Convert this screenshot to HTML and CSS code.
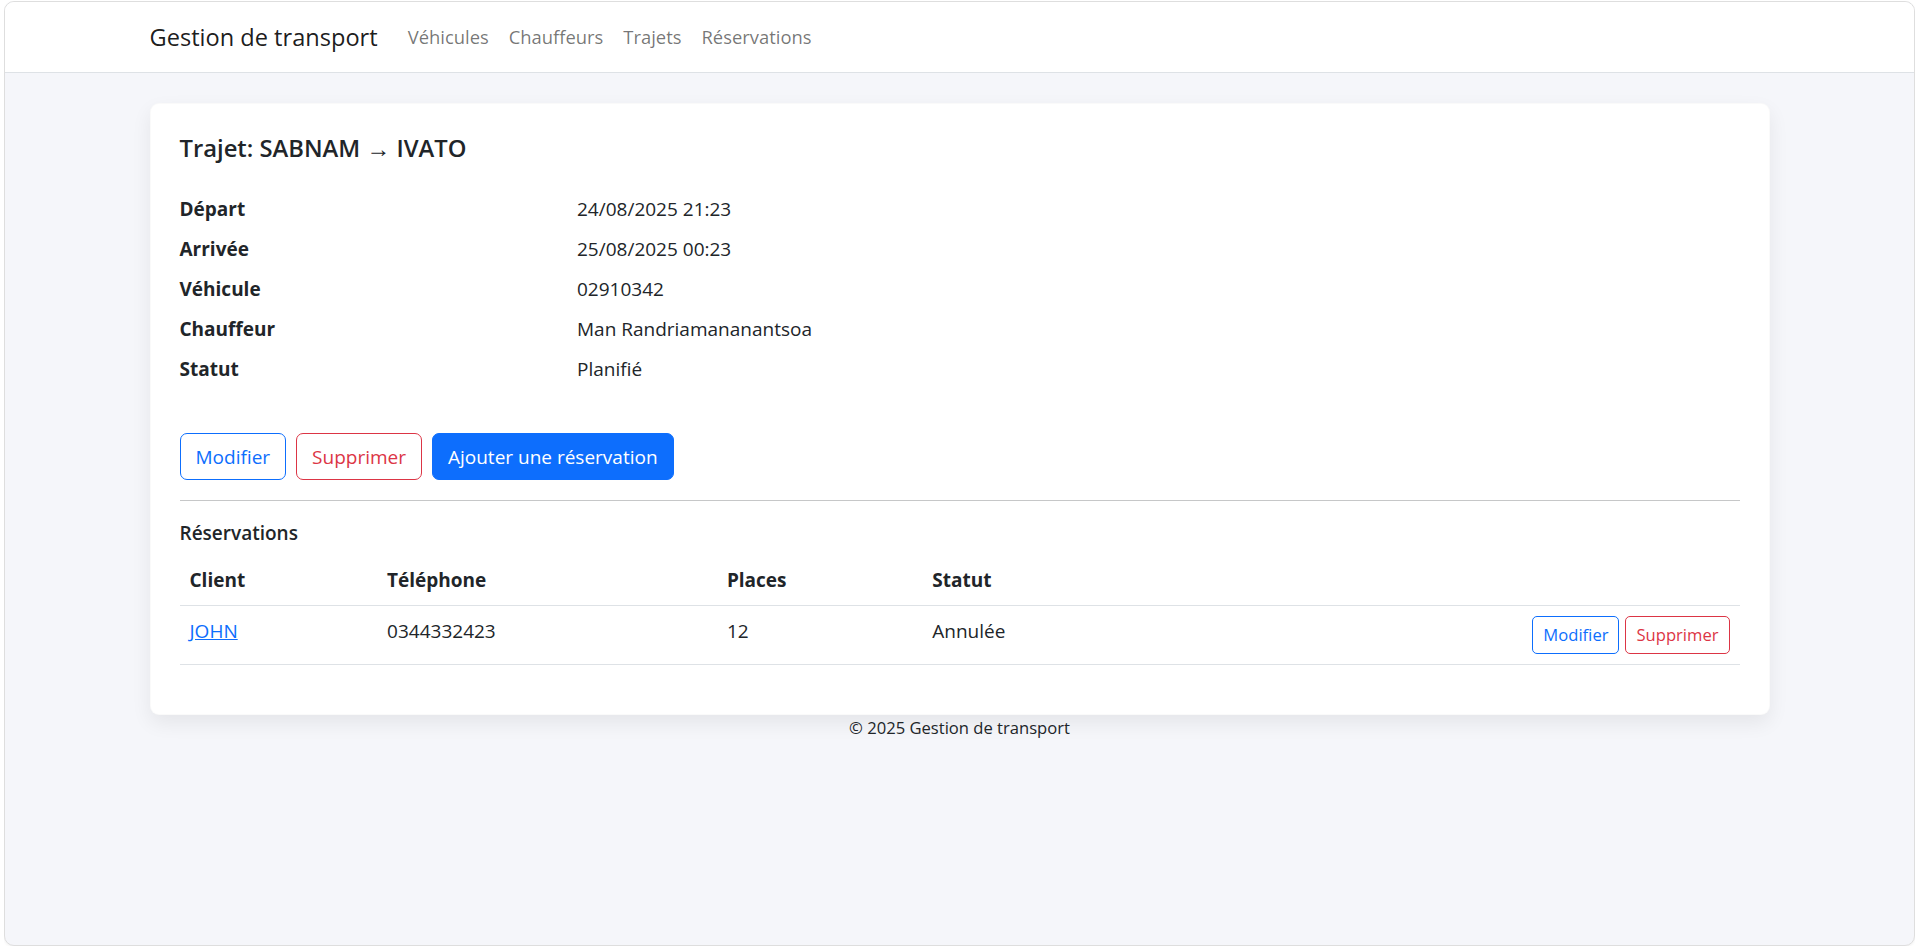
FILE: index.html
```html
<!DOCTYPE html>
<html lang="fr">
<head>
<meta charset="utf-8">
<title>Gestion de transport</title>
<link rel="stylesheet" href="styles.css">
</head>
<body>
<div class="window">
  <nav class="navbar">
    <div class="container nav-inner">
      <a class="brand" href="#">Gestion de transport</a>
      <ul class="nav-links">
        <li><a href="#">Véhicules</a></li>
        <li><a href="#">Chauffeurs</a></li>
        <li><a href="#">Trajets</a></li>
        <li><a href="#">Réservations</a></li>
      </ul>
    </div>
  </nav>
  <main class="container">
    <div class="card">
      <div class="card-body">
        <h5 class="title">Trajet: SABNAM → IVATO</h5>
        <dl class="details">
          <dt>Départ</dt><dd>24/08/2025 21:23</dd>
          <dt>Arrivée</dt><dd>25/08/2025 00:23</dd>
          <dt>Véhicule</dt><dd>02910342</dd>
          <dt>Chauffeur</dt><dd>Man Randriamananantsoa</dd>
          <dt>Statut</dt><dd>Planifié</dd>
        </dl>
        <div class="actions">
          <a class="btn btn-outline-primary" href="#">Modifier</a>
          <a class="btn btn-outline-danger" href="#">Supprimer</a>
          <a class="btn btn-primary" href="#">Ajouter une réservation</a>
        </div>
        <hr class="divider">
        <h6 class="subtitle">Réservations</h6>
        <table class="table">
          <thead>
            <tr>
              <th class="col-client">Client</th>
              <th class="col-phone">Téléphone</th>
              <th class="col-places">Places</th>
              <th class="col-status">Statut</th>
              <th class="col-actions"></th>
            </tr>
          </thead>
          <tbody>
            <tr>
              <td><a class="link" href="#">JOHN</a></td>
              <td>0344332423</td>
              <td>12</td>
              <td>Annulée</td>
              <td class="cell-actions"><a class="btn btn-sm btn-outline-primary" href="#">Modifier</a><a class="btn btn-sm btn-outline-danger" href="#">Supprimer</a></td>
            </tr>
          </tbody>
        </table>
      </div>
    </div>
    <footer class="footer">© 2025 Gestion de transport</footer>
  </main>
</div>
</body>
</html>
```

FILE: styles.css
```css
* { box-sizing: border-box; }

html {
  background: #ffffff;
}

body {
  margin: 1px 2px 0 4px;
  font-family: "Open Sans", "Noto Sans", sans-serif;
  font-size: 19px;
  line-height: 30px;
  color: #212529;
}

.window {
  height: 945px;
  border: 1px solid #dedede;
  border-radius: 10px;
  overflow: hidden;
  background: #f5f6fa;
  box-shadow: 0 1px 3px rgba(0, 0, 0, 0.06);
}

.container {
  max-width: 1650px;
  margin: 0 auto;
  padding: 0 15px;
}

/* Navbar */
.navbar {
  height: 71px;
  background: #ffffff;
  border-bottom: 1px solid #dee2e6;
}

.nav-inner {
  height: 70px;
  display: flex;
  align-items: center;
}

.brand {
  font-size: 23.6px;
  line-height: 36px;
  color: rgba(0, 0, 0, 0.9);
  text-decoration: none;
  margin-right: 20px;
}

.nav-links {
  display: flex;
  list-style: none;
  margin: 0;
  padding: 0;
}

.nav-links a {
  display: block;
  padding: 10px 10px;
  font-size: 18.4px;
  color: rgba(0, 0, 0, 0.55);
  text-decoration: none;
}

/* Card */
.card {
  margin-top: 30px;
  background: #ffffff;
  border: 1px solid rgba(0, 0, 0, 0.02);
  border-radius: 9px;
  box-shadow: 0 8px 20px rgba(0, 0, 0, 0.07);
}

.card-body {
  padding: 29px;
}

.title {
  margin: 0 0 31px;
  font-size: 23.8px;
  line-height: 30px;
  font-weight: 600;
}

.details {
  display: grid;
  grid-template-columns: calc(25% + 7.5px) 1fr;
  margin: 0 0 39px;
}

.details dt {
  font-weight: 700;
  margin: 0 0 10px;
}

.details dd {
  margin: 0 0 10px;
}

/* Buttons */
.actions {
  display: flex;
  gap: 10px;
}

.btn {
  display: inline-block;
  padding: 7.5px 15px;
  font-size: 19px;
  line-height: 30px;
  border: 1px solid transparent;
  border-radius: 7px;
  text-decoration: none;
  white-space: nowrap;
}

.btn-outline-primary {
  color: #0d6efd;
  border-color: #0d6efd;
  background: transparent;
}

.btn-outline-danger {
  color: #dc3545;
  border-color: #dc3545;
  background: transparent;
}

.btn-primary {
  color: #ffffff;
  background: #0d6efd;
  border-color: #0d6efd;
}

.btn-sm {
  padding: 5px 10px;
  font-size: 16.6px;
  line-height: 26.25px;
  border-radius: 5px;
}

.divider {
  margin: 20px 0;
  border: 0;
  border-top: 1px solid #c6c7c8;
}

.subtitle {
  margin: 0 0 10px;
  font-size: 19px;
  line-height: 24px;
  font-weight: 600;
}

/* Table */
.table {
  width: 100%;
  border-collapse: collapse;
  margin-bottom: 20px;
  vertical-align: top;
}

.table th,
.table td {
  padding: 10px 10px;
  border-bottom: 1px solid #dee2e6;
  text-align: left;
  vertical-align: top;
}

.table th {
  font-weight: 700;
}

.col-client { width: 197.6px; }
.col-phone { width: 339.8px; }
.col-places { width: 205.4px; }
.col-actions { width: 1%; }

.cell-actions {
  text-align: right !important;
  white-space: nowrap;
}

.cell-actions .btn + .btn {
  margin-left: 6px;
}

.link {
  color: #0d6efd;
  text-decoration: underline;
}

/* Footer */
.footer {
  text-align: center;
  font-size: 16.6px;
  line-height: 26.25px;
  color: #212529;
}
```
